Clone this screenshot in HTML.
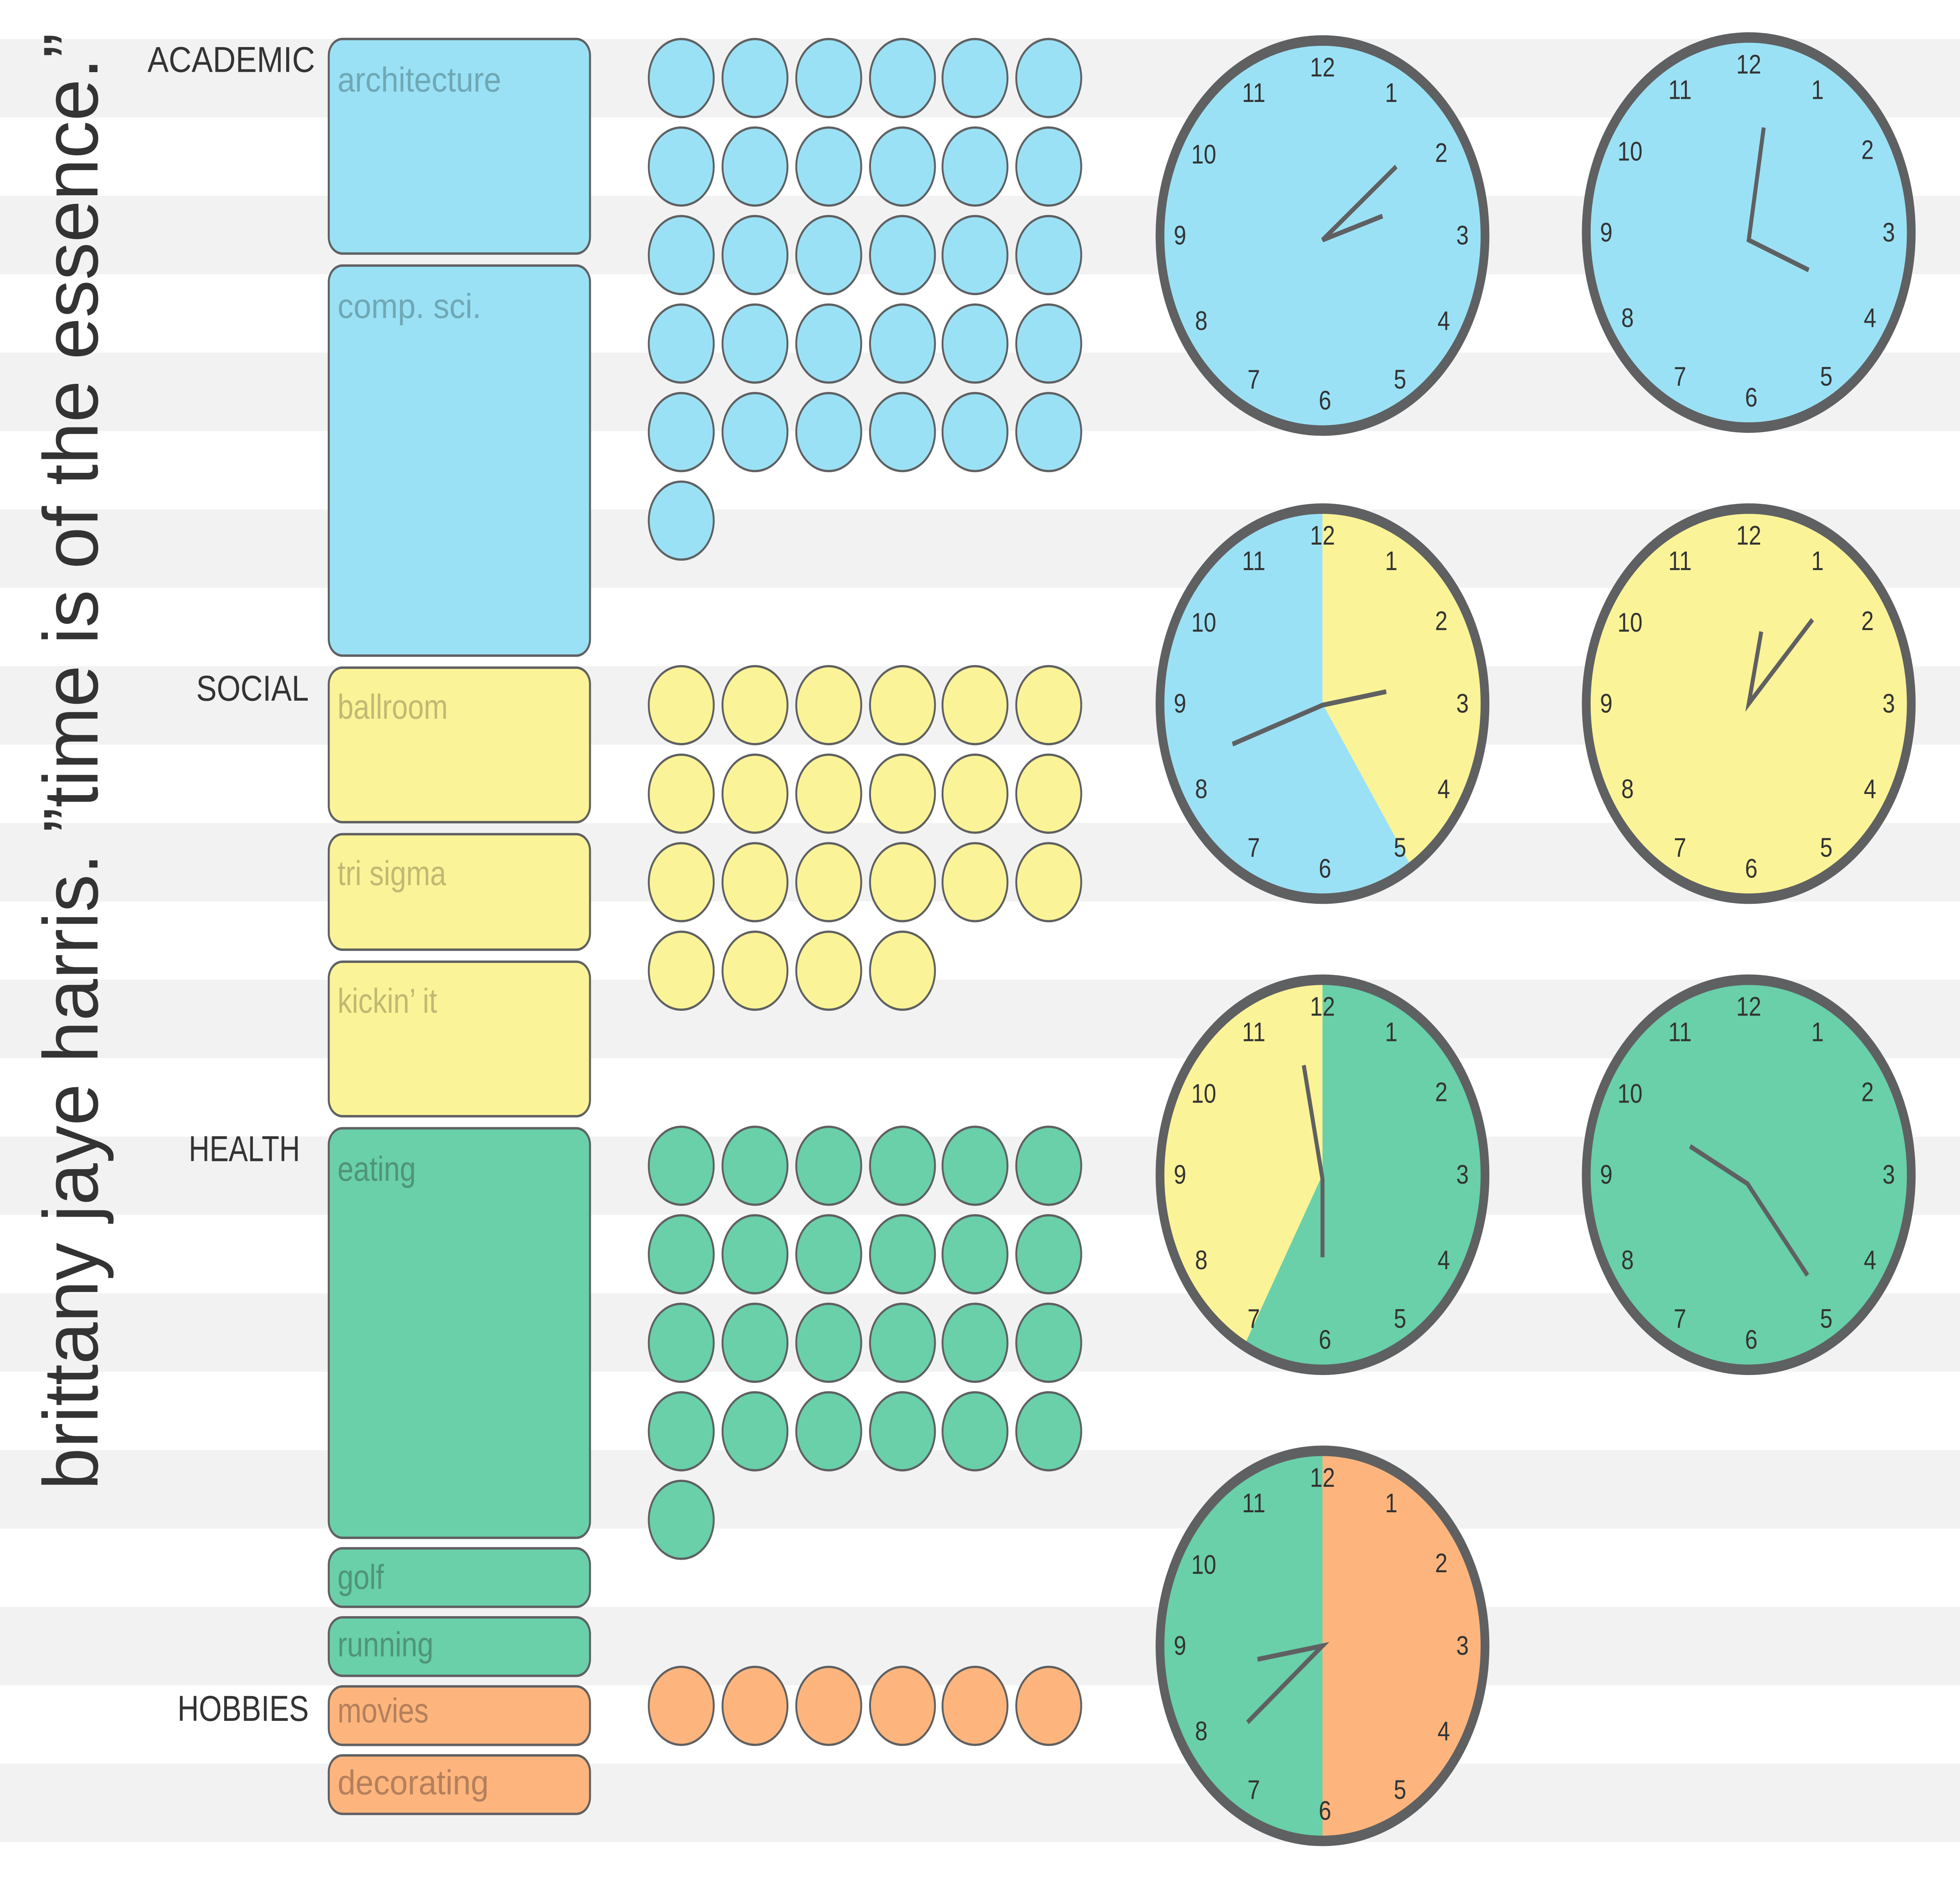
<!DOCTYPE html>
<html><head><meta charset="utf-8"><style>
html,body{margin:0;padding:0;background:#fff;width:100%;height:100%;overflow:hidden;}
svg{display:block;width:100vw;height:100vh;}
text{font-family:"Liberation Sans","DejaVu Sans",sans-serif;}
.n{font-size:18px;fill:#333;text-anchor:middle;dominant-baseline:central;}
.lab{font-size:23px;}
.cat{font-size:24px;fill:#333;}
.hand{stroke:#5f6062;stroke-width:3.2;fill:none;stroke-linejoin:miter;}
.rim{fill:none;stroke:#5f6062;stroke-width:7;}
.bx{stroke:#5f6062;stroke-width:1.6;}
.c{stroke:#5f6062;stroke-width:1.5;}
</style></head><body>
<svg viewBox="0 0 1568 1254.4" preserveAspectRatio="none" xmlns="http://www.w3.org/2000/svg">
<rect width="1568" height="1255" fill="#fff"/>
<g fill="#f2f2f2">
<rect x="0" y="26" width="1568" height="52.3"/>
<rect x="0" y="130.5" width="1568" height="52.3"/>
<rect x="0" y="235" width="1568" height="52.3"/>
<rect x="0" y="339.5" width="1568" height="52.3"/>
<rect x="0" y="444" width="1568" height="52.3"/>
<rect x="0" y="548.5" width="1568" height="52.3"/>
<rect x="0" y="653" width="1568" height="52.3"/>
<rect x="0" y="757.5" width="1568" height="52.3"/>
<rect x="0" y="862" width="1568" height="52.3"/>
<rect x="0" y="966.5" width="1568" height="52.3"/>
<rect x="0" y="1071" width="1568" height="52.3"/>
<rect x="0" y="1175.5" width="1568" height="52.3"/>
</g>

<text transform="translate(78,993) rotate(-90)" font-size="62" fill="#333" textLength="971" lengthAdjust="spacingAndGlyphs">brittany jaye harris.  ”time is of the essence.”</text>

<text class="cat" x="118" y="48" textLength="134" lengthAdjust="spacingAndGlyphs">ACADEMIC</text>
<text class="cat" x="157" y="467" textLength="90" lengthAdjust="spacingAndGlyphs">SOCIAL</text>
<text class="cat" x="151" y="774" textLength="89" lengthAdjust="spacingAndGlyphs">HEALTH</text>
<text class="cat" x="142" y="1147" textLength="105" lengthAdjust="spacingAndGlyphs">HOBBIES</text>

<g class="bx">
<rect x="263" y="26" width="209" height="143" rx="11" fill="#9be1f5"/>
<rect x="263" y="177" width="209" height="260" rx="11" fill="#9be1f5"/>
<rect x="263" y="445" width="209" height="103" rx="11" fill="#fbf397"/>
<rect x="263" y="556" width="209" height="77" rx="11" fill="#fbf397"/>
<rect x="263" y="641" width="209" height="103" rx="11" fill="#fbf397"/>
<rect x="263" y="752" width="209" height="273" rx="11" fill="#69d0a9"/>
<rect x="263" y="1032" width="209" height="39" rx="11" fill="#69d0a9"/>
<rect x="263" y="1078" width="209" height="39" rx="11" fill="#69d0a9"/>
<rect x="263" y="1124" width="209" height="39" rx="11" fill="#fdb57d"/>
<rect x="263" y="1170" width="209" height="39" rx="11" fill="#fdb57d"/>
</g>
<g class="lab">
<text x="270" y="61" fill="#6fa8b5" textLength="131" lengthAdjust="spacingAndGlyphs">architecture</text>
<text x="270" y="212" fill="#6fa8b5" textLength="115" lengthAdjust="spacingAndGlyphs">comp. sci.</text>
<text x="270" y="479" fill="#c0b973">ballroom</text>
<text x="270" y="590" fill="#c0b973">tri sigma</text>
<text x="270" y="675" fill="#c0b973">kickin’ it</text>
<text x="270" y="787" fill="#4f9479">eating</text>
<text x="270" y="1059" fill="#4f9479">golf</text>
<text x="270" y="1104" fill="#4f9479">running</text>
<text x="270" y="1148" fill="#b47f5c">movies</text>
<text x="270" y="1196" fill="#b47f5c" textLength="121" lengthAdjust="spacingAndGlyphs">decorating</text>
</g>

<g class="c" fill="#9be1f5">
<circle cx="545" cy="52" r="26"/><circle cx="604" cy="52" r="26"/><circle cx="663" cy="52" r="26"/><circle cx="722" cy="52" r="26"/><circle cx="780" cy="52" r="26"/><circle cx="839" cy="52" r="26"/>
<circle cx="545" cy="111" r="26"/><circle cx="604" cy="111" r="26"/><circle cx="663" cy="111" r="26"/><circle cx="722" cy="111" r="26"/><circle cx="780" cy="111" r="26"/><circle cx="839" cy="111" r="26"/>
<circle cx="545" cy="170" r="26"/><circle cx="604" cy="170" r="26"/><circle cx="663" cy="170" r="26"/><circle cx="722" cy="170" r="26"/><circle cx="780" cy="170" r="26"/><circle cx="839" cy="170" r="26"/>
<circle cx="545" cy="229" r="26"/><circle cx="604" cy="229" r="26"/><circle cx="663" cy="229" r="26"/><circle cx="722" cy="229" r="26"/><circle cx="780" cy="229" r="26"/><circle cx="839" cy="229" r="26"/>
<circle cx="545" cy="288" r="26"/><circle cx="604" cy="288" r="26"/><circle cx="663" cy="288" r="26"/><circle cx="722" cy="288" r="26"/><circle cx="780" cy="288" r="26"/><circle cx="839" cy="288" r="26"/>
<circle cx="545" cy="347" r="26"/>
</g>
<g class="c" fill="#fbf397">
<circle cx="545" cy="470" r="26"/><circle cx="604" cy="470" r="26"/><circle cx="663" cy="470" r="26"/><circle cx="722" cy="470" r="26"/><circle cx="780" cy="470" r="26"/><circle cx="839" cy="470" r="26"/>
<circle cx="545" cy="529" r="26"/><circle cx="604" cy="529" r="26"/><circle cx="663" cy="529" r="26"/><circle cx="722" cy="529" r="26"/><circle cx="780" cy="529" r="26"/><circle cx="839" cy="529" r="26"/>
<circle cx="545" cy="588" r="26"/><circle cx="604" cy="588" r="26"/><circle cx="663" cy="588" r="26"/><circle cx="722" cy="588" r="26"/><circle cx="780" cy="588" r="26"/><circle cx="839" cy="588" r="26"/>
<circle cx="545" cy="647" r="26"/><circle cx="604" cy="647" r="26"/><circle cx="663" cy="647" r="26"/><circle cx="722" cy="647" r="26"/>
</g>
<g class="c" fill="#69d0a9">
<circle cx="545" cy="777" r="26"/><circle cx="604" cy="777" r="26"/><circle cx="663" cy="777" r="26"/><circle cx="722" cy="777" r="26"/><circle cx="780" cy="777" r="26"/><circle cx="839" cy="777" r="26"/>
<circle cx="545" cy="836" r="26"/><circle cx="604" cy="836" r="26"/><circle cx="663" cy="836" r="26"/><circle cx="722" cy="836" r="26"/><circle cx="780" cy="836" r="26"/><circle cx="839" cy="836" r="26"/>
<circle cx="545" cy="895" r="26"/><circle cx="604" cy="895" r="26"/><circle cx="663" cy="895" r="26"/><circle cx="722" cy="895" r="26"/><circle cx="780" cy="895" r="26"/><circle cx="839" cy="895" r="26"/>
<circle cx="545" cy="954" r="26"/><circle cx="604" cy="954" r="26"/><circle cx="663" cy="954" r="26"/><circle cx="722" cy="954" r="26"/><circle cx="780" cy="954" r="26"/><circle cx="839" cy="954" r="26"/>
<circle cx="545" cy="1013" r="26"/>
</g>
<g class="c" fill="#fdb57d">
<circle cx="545" cy="1137" r="26"/><circle cx="604" cy="1137" r="26"/><circle cx="663" cy="1137" r="26"/><circle cx="722" cy="1137" r="26"/><circle cx="780" cy="1137" r="26"/><circle cx="839" cy="1137" r="26"/>
</g>

<g transform="translate(1058,157)">
<circle r="130" fill="#9be1f5"/>
<g class="n"><text x="55" y="-95">1</text><text x="95" y="-55">2</text><text x="112" y="0">3</text><text x="97" y="57">4</text><text x="62" y="96">5</text><text x="2" y="110">6</text><text x="-55" y="96">7</text><text x="-97" y="57">8</text><text x="-114" y="0">9</text><text x="-95" y="-54">10</text><text x="-55" y="-95">11</text><text x="0" y="-112">12</text></g>
<path class="hand" d="M59,-46 L0,3 L48,-13"/>
<circle r="130" class="rim"/>
</g>
<g transform="translate(1399,155)">
<circle r="130" fill="#9be1f5"/>
<g class="n"><text x="55" y="-95">1</text><text x="95" y="-55">2</text><text x="112" y="0">3</text><text x="97" y="57">4</text><text x="62" y="96">5</text><text x="2" y="110">6</text><text x="-55" y="96">7</text><text x="-97" y="57">8</text><text x="-114" y="0">9</text><text x="-95" y="-54">10</text><text x="-55" y="-95">11</text><text x="0" y="-112">12</text></g>
<path class="hand" d="M12,-70 L0,5 L48,25"/>
<circle r="130" class="rim"/>
</g>
<g transform="translate(1058,469)">
<circle r="130" fill="#9be1f5"/>
<path d="M0,0 L0,-130 A130,130 0 0 1 71.2,108.8 Z" fill="#fbf397"/>
<g class="n"><text x="55" y="-95">1</text><text x="95" y="-55">2</text><text x="112" y="0">3</text><text x="97" y="57">4</text><text x="62" y="96">5</text><text x="2" y="110">6</text><text x="-55" y="96">7</text><text x="-97" y="57">8</text><text x="-114" y="0">9</text><text x="-95" y="-54">10</text><text x="-55" y="-95">11</text><text x="0" y="-112">12</text></g>
<path class="hand" d="M51,-8 L0,1 L-72,27"/>
<circle r="130" class="rim"/>
</g>
<g transform="translate(1399,469)">
<circle r="130" fill="#fbf397"/>
<g class="n"><text x="55" y="-95">1</text><text x="95" y="-55">2</text><text x="112" y="0">3</text><text x="97" y="57">4</text><text x="62" y="96">5</text><text x="2" y="110">6</text><text x="-55" y="96">7</text><text x="-97" y="57">8</text><text x="-114" y="0">9</text><text x="-95" y="-54">10</text><text x="-55" y="-95">11</text><text x="0" y="-112">12</text></g>
<path class="hand" d="M10,-48 L0,0 L51,-56"/>
<circle r="130" class="rim"/>
</g>
<g transform="translate(1058,783)">
<circle r="130" fill="#69d0a9"/>
<path d="M0,0 L-62.6,113.9 A130,130 0 0 1 0,-130 Z" fill="#fbf397"/>
<g class="n"><text x="55" y="-95">1</text><text x="95" y="-55">2</text><text x="112" y="0">3</text><text x="97" y="57">4</text><text x="62" y="96">5</text><text x="2" y="110">6</text><text x="-55" y="96">7</text><text x="-97" y="57">8</text><text x="-114" y="0">9</text><text x="-95" y="-54">10</text><text x="-55" y="-95">11</text><text x="0" y="-112">12</text></g>
<path class="hand" d="M-15,-73 L0,3 L0,55"/>
<circle r="130" class="rim"/>
</g>
<g transform="translate(1399,783)">
<circle r="130" fill="#69d0a9"/>
<g class="n"><text x="55" y="-95">1</text><text x="95" y="-55">2</text><text x="112" y="0">3</text><text x="97" y="57">4</text><text x="62" y="96">5</text><text x="2" y="110">6</text><text x="-55" y="96">7</text><text x="-97" y="57">8</text><text x="-114" y="0">9</text><text x="-95" y="-54">10</text><text x="-55" y="-95">11</text><text x="0" y="-112">12</text></g>
<path class="hand" d="M-47,-19 L-1,6 L47,67"/>
<circle r="130" class="rim"/>
</g>
<g transform="translate(1058,1097)">
<circle r="130" fill="#69d0a9"/>
<path d="M0,-130 A130,130 0 0 1 0,130 Z" fill="#fdb57d"/>
<g class="n"><text x="55" y="-95">1</text><text x="95" y="-55">2</text><text x="112" y="0">3</text><text x="97" y="57">4</text><text x="62" y="96">5</text><text x="2" y="110">6</text><text x="-55" y="96">7</text><text x="-97" y="57">8</text><text x="-114" y="0">9</text><text x="-95" y="-54">10</text><text x="-55" y="-95">11</text><text x="0" y="-112">12</text></g>
<path class="hand" d="M-52,9 L0,0 L-60,51"/>
<circle r="130" class="rim"/>
</g>
</svg>
</body></html>
